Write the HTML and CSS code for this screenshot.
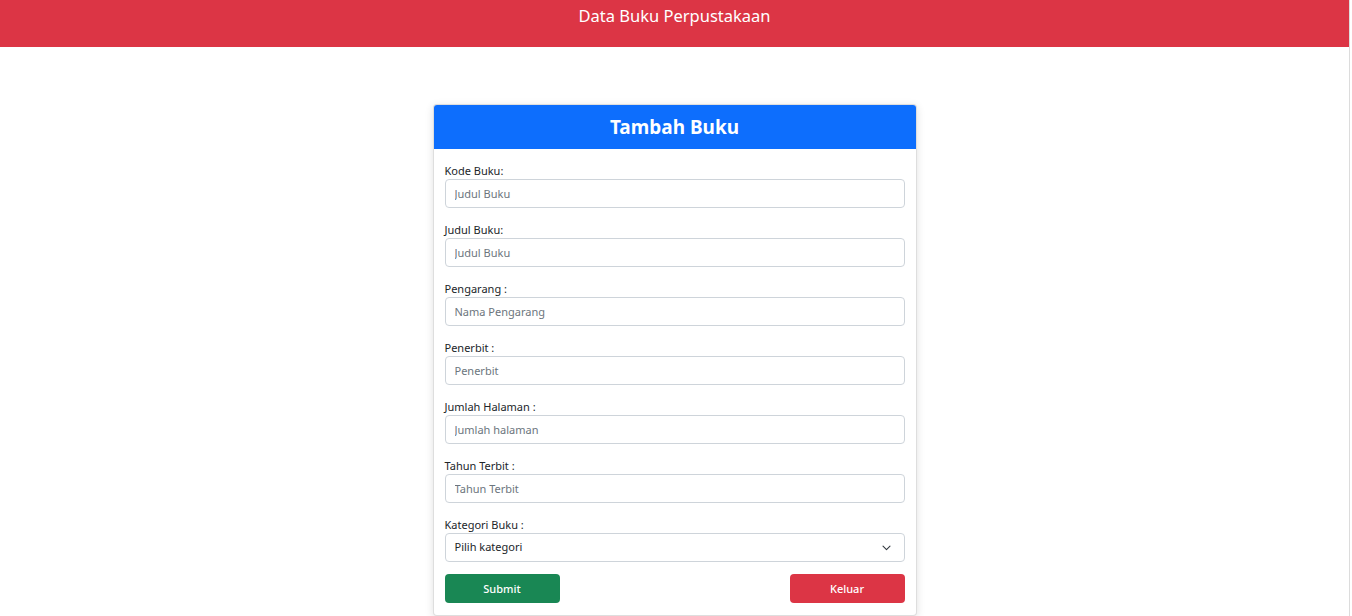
FILE: index.html
```html
<!DOCTYPE html>
<html lang="id">
<head>
<meta charset="utf-8">
<title>Data Buku Perpustakaan</title>
<link rel="stylesheet" href="styles.css">
</head>
<body>
<div class="page">
  <header class="topbar">
    <h1 class="topbar-title">Data Buku Perpustakaan</h1>
  </header>
  <main class="main">
    <section class="card">
      <div class="card-header">
        <h2 class="card-title">Tambah Buku</h2>
      </div>
      <form class="card-body">
        <div class="group">
          <label class="label">Kode Buku:</label>
          <input class="input" type="text" placeholder="Judul Buku">
        </div>
        <div class="group">
          <label class="label">Judul Buku:</label>
          <input class="input" type="text" placeholder="Judul Buku">
        </div>
        <div class="group">
          <label class="label">Pengarang :</label>
          <input class="input" type="text" placeholder="Nama Pengarang">
        </div>
        <div class="group">
          <label class="label">Penerbit :</label>
          <input class="input" type="text" placeholder="Penerbit">
        </div>
        <div class="group">
          <label class="label">Jumlah Halaman :</label>
          <input class="input" type="text" placeholder="Jumlah halaman">
        </div>
        <div class="group">
          <label class="label">Tahun Terbit :</label>
          <input class="input" type="text" placeholder="Tahun Terbit">
        </div>
        <div class="group">
          <label class="label">Kategori Buku :</label>
          <div class="select">
            <span class="select-text">Pilih kategori</span>
            <svg class="chevron" width="9" height="6" viewBox="0 0 9 6"><path d="M1 1.2l3.5 3.5 3.5-3.5" fill="none" stroke="#343a40" stroke-width="1.1" stroke-linecap="round" stroke-linejoin="round"/></svg>
          </div>
        </div>
        <div class="actions">
          <button type="button" class="btn btn-success">Submit</button>
          <button type="button" class="btn btn-danger">Keluar</button>
        </div>
      </form>
    </section>
  </main>
</div>
</body>
</html>
```
FILE: styles.css
```css
html, body {
  margin: 0;
  padding: 0;
  background: #fff;
}
body {
  font-family: "Noto Sans", "Open Sans", sans-serif;
  color: #212529;
  font-size: 11px;
  line-height: 1.5;
}
.page {
  width: 1349px;
  min-height: 616px;
  border-right: 1px solid #dcdcdc;
}
.topbar {
  background: #dc3545;
  height: 47px;
  box-sizing: border-box;
  padding-top: 4px;
  text-align: center;
}
.topbar-title {
  margin: 0;
  font-size: 16.5px;
  font-weight: 400;
  line-height: 24px;
  color: #fff;
}
.main {
  display: flex;
  justify-content: center;
  padding-top: 57px;
}
.card {
  width: 484px;
  box-sizing: border-box;
  border: 1px solid rgba(0,0,0,0.13);
  border-radius: 4px;
  box-shadow: 0 2px 8px rgba(0,0,0,0.12);
  background: #fff;
  overflow: hidden;
}
.card-header {
  background: #0d6efd;
  height: 44px;
  display: flex;
  align-items: center;
  justify-content: center;
}
.card-title {
  margin: 0;
  font-size: 19px;
  font-weight: 700;
  line-height: 1.2;
  color: #fff;
}
.card-body {
  padding: 12px 11px 12px 11px;
  display: flex;
  flex-direction: column;
  gap: 12px;
}
.group {
  display: flex;
  flex-direction: column;
}
.label {
  font-size: 11px;
  line-height: 18px;
  padding-top: 1px;
  margin-bottom: -1px;
  color: #212529;
}
.input, .select {
  box-sizing: border-box;
  height: 29px;
  width: 100%;
  border: 1px solid #ced4da;
  border-radius: 4px;
  padding: 0 9px;
  font-family: inherit;
  font-size: 11px;
  color: #212529;
  background: #fff;
  margin: 0;
}
.input::placeholder {
  color: #6c757d;
}
.select {
  display: flex;
  align-items: center;
  justify-content: space-between;
}
.chevron {
  display: block;
  margin-right: 4px;
}
.actions {
  display: flex;
  justify-content: space-between;
}
.btn {
  width: 115px;
  height: 29px;
  border: none;
  border-radius: 4px;
  font-family: inherit;
  font-size: 11px;
  font-weight: 500;
  color: #fff;
  padding: 0;
}
.btn-success { background: #198754; }
.btn-danger { background: #dc3545; }
```
